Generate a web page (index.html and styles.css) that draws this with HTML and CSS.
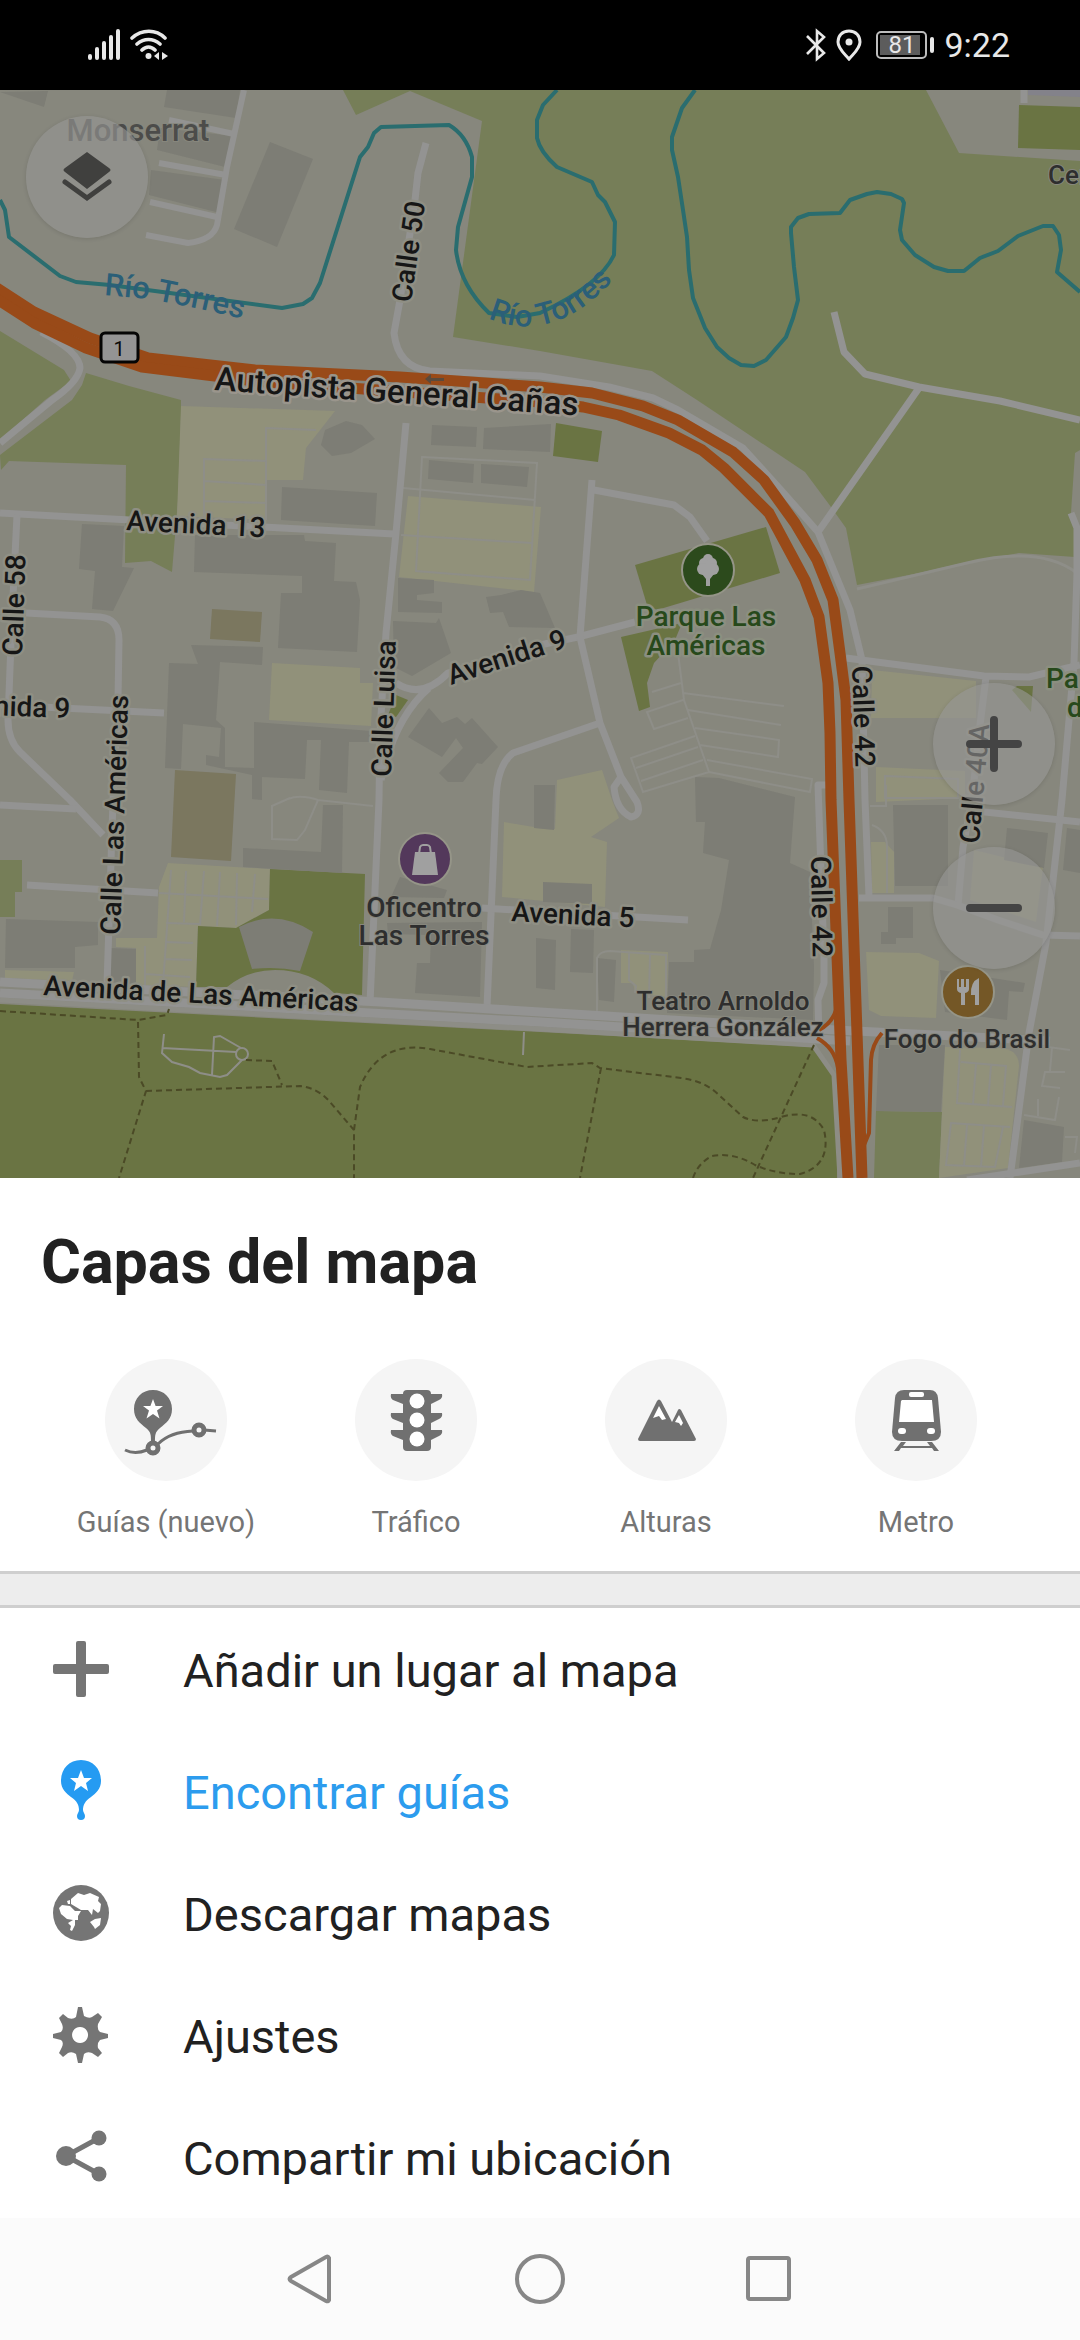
FILE: index.html
```html
<!DOCTYPE html>
<html lang="es">
<head>
<meta charset="utf-8">
<meta name="viewport" content="width=device-width, initial-scale=1">
<title>Capas del mapa</title>
<link rel="stylesheet" href="styles.css">
</head>
<body>
<header class="status">
  <div class="status-group status-signal">
    <svg width="34" height="32" viewBox="0 0 34 32" stroke="#e8e8e8" stroke-width="4" stroke-linecap="round" aria-hidden="true"><path d="M3 27v2M10 20v9M17 14v15M24 8v21M31 2v27"/></svg>
    <svg width="38" height="32" viewBox="0 0 38 32" fill="none" stroke="#e8e8e8" stroke-width="3.6" stroke-linecap="round" aria-hidden="true"><path d="M2 9C12 0 26 0 35 9M7 15c7-6 16-6 23 0M12 21c4-4 9-4 13 0"/><circle cx="18.500" cy="27" r="3" fill="#e8e8e8" stroke="none"/><path d="M24 27l5-4v8zM38 27l-6-4v8z" fill="#e8e8e8" stroke="none"/></svg>
  </div>
  <div class="status-group status-info">
    <svg width="20" height="34" viewBox="0 0 20 34" fill="none" stroke="#e8e8e8" stroke-width="2.600" aria-hidden="true"><path d="M1 8l17 17-7 6V3l7 6L1 26"/></svg>
    <svg width="26" height="32" viewBox="0 0 26 32" aria-hidden="true"><path d="M13 2C6 2 2 7 2 13c0 7 7 12 11 17 4-5 11-10 11-17C24 7 20 2 13 2z" fill="none" stroke="#e8e8e8" stroke-width="3"/><circle cx="13" cy="13" r="3.500" fill="#e8e8e8"/></svg>
    <span class="battery"><span class="battery-level">81</span></span>
    <time class="clock">9:22</time>
  </div>
</header>

<main class="app">
  <section class="map" aria-label="Mapa">
    <svg class="map-canvas" viewBox="0 90 1080 1088" preserveAspectRatio="xMidYMid slice">
      <rect class="land" x="0" y="90" width="1080" height="1088"/>
      <g class="forest">
        <path d="M343 90 356 115 410 91 482 121 453 337 540 351 652 371 697 400 805 472 831 507 846 528 857 585 919 573 967 562 1019 553 1075 557 1077 528 1071 513 1075 453 1080 450V161L959 153 926 90z"/>
        <path d="M0 331 64 370 71 381 45 400 0 440z"/>
        <path d="M86 373 129 386 181 400V415L178 500 172 572 151 561 125 563 126 465 9 461 1 470 0 455 72 400 82 385z"/>
        <path d="M0 860H22V892H15V917H0z"/>
        <path d="M876 1111 942 1112 939 1178H874z"/>
      </g>
      <path d="M1028 90H1080V97L1028 95z" fill="#83828a"/>
      <g class="parking">
        <path d="M181 406 335 411 306 448 303 480H267V520L177 516z"/>
        <path d="M408 496 541 507 534 592 399 577z"/>
        <path d="M272 663 360 668V683H373L371 726 269 720z"/>
        <path d="M168 863 270 869 269 910 236 928 198 926 196 987 136 985V948L116 947V938H157L159 887z"/>
        <path d="M5 970 74 972 72 981 5 978z"/>
        <path d="M557 780 602 770 612 800 619 818 591 837 607 842 605 907 502 897 504 822 540 828 555 829z"/>
        <path d="M872 670 976 681V718H871z"/>
        <path d="M876 767 965 771V798L876 802z"/>
        <path d="M871 842H885L894 852V893H872z"/>
        <path d="M866 952 919 953 939 961 936 1018 881 1016 869 1010z"/>
        <path d="M945 1047 1001 1048Q1019 1050 1019 1066L1008 1168 939 1178z"/>
        <path d="M621 950 668 952 667 997 635 993 633 983H621z"/>
        <path d="M974 850 1043 867 1036 922 970 900z"/>
      </g>
      <g fill="#7b775f">
        <path d="M212 609 262 612 260 642 210 639z"/>
        <path d="M175 770 236 774 231 861 171 857z"/>
      </g>
      <g class="park">
        <path d="M1019 105 1080 107V150L1018 148z"/>
        <path d="M635 565 766 527 780 573 657 610 647 605z"/>
        <path d="M621 637 682 623 675 640 654 663 647 683 650 707 639 711z"/>
        <path d="M556 423 602 431 598 462 553 456z"/>
        <path d="M396 695 408 700 396 717 388 715z"/>
        <path d="M1017 686H1033L1031 712 1012 690z"/>
        <path d="M270 869 365 874 362 995 334 993Q310 970 275 970 248 970 227 987L196 987 198 926 236 928 269 910z"/>
        <path d="M0 1004 540 1032 812 1047 826 1063 833 1077 837 1100V1178H0z"/>
      </g>
      <g class="building">
        <path d="M270 142 313 159 277 247 234 229z"/>
        <path d="M167 90H240L236 118 164 107z"/>
        <path d="M160 128 234 136 229 168 157 150z"/>
        <path d="M151 170 225 180 220 213 149 195z"/>
        <path d="M0 92 48 91 44 107z"/>
        <path d="M325 430 346 421 362 425 375 439 351 453 332 456 321 445z"/>
        <path d="M282 487 377 493 375 526 281 520z"/>
        <path d="M195 535H304L305 541 336 543 334 581 356 582 360 600 357 652 278 648 281 593 302 593V576L194 572z"/>
        <path d="M432 425 477 427 476 447 431 445z"/>
        <path d="M484 428 551 424 550 452 483 449z"/>
        <path d="M429 460 474 464 473 483 428 479z"/>
        <path d="M481 464 529 467 527 487 481 483z"/>
        <path d="M82 524 124 526 122 567 134 568 113 611 92 609 95 571 79 569z"/>
        <path d="M398 578 434 580V593L417 595V600L442 602V613L398 612z"/>
        <path d="M393 621 436 623 439 618 451 653 412 676 394 667z"/>
        <path d="M486 597 501 595 521 590 540 593 555 628 509 627 503 612 490 613z"/>
        <path d="M191 645 263 647 262 665 220 662 216 720 225 728V767L254 768V722L371 731V742L349 742 347 793 319 790 321 740 307 740 305 779 262 777V800L252 799V775L206 765V755L219 757 221 728 183 724 181 769 165 768 169 663 198 664z"/>
        <path d="M429 708 442 723 457 717 465 724 472 718 498 747 482 764 477 763 463 782H448L439 773 463 748 456 738 442 757 408 737z"/>
        <path d="M323 805H343L342 873 243 867V848L321 852z"/>
        <path d="M6 919 98 922V945L75 947V968H5z"/>
        <path d="M110 948 136 949V984L110 982z"/>
        <path d="M400 877 447 890 444 898 391 897z"/>
        <path d="M387 923 482 922 480 997 415 993 417 963 430 963 431 935 388 934z"/>
        <path d="M239 927Q276 908 313 932L300 971Q276 966 252 969z"/>
        <path d="M543 882 592 884V904L543 902z"/>
        <path d="M695 777 719 778 795 797 790 863 810 872 814 967 813 1020 667 1013 669 962H694V950L710 949 721 910 729 860 703 853 705 822 696 822z"/>
        <path d="M571 929 594 930 593 973 570 972z"/>
        <path d="M597 958 616 960 614 1002 599 1000z"/>
        <path d="M536 938 556 940 555 990 536 988z"/>
        <path d="M534 785H555L554 830 534 828z"/>
        <path d="M893 805H948V886H895z"/>
        <path d="M888 907H913V938H896V944H881V932H888z"/>
        <path d="M1007 828 1048 833 1044 868 1004 860z"/>
        <path d="M1067 828 1080 830V873L1063 870z"/>
        <path d="M940 970 1025 983 1023 992 1009 991 1007 1020 945 1012z"/>
        <path d="M879 1045H945L941 1112 876 1111z"/>
        <path d="M1024 1120 1064 1127 1062 1162 1019 1168z"/>
      </g>

      <g class="lane">
        <path d="M204 516V459L267 461M204 481 267 485M204 501 267 503M266 520V428L316 430"/>
        <path d="M422 457 537 463 530 580 416 571zM403 488 535 500M401 535 532 543"/>
        <path d="M171 870 163 985M186 871 184 922M204 871 200 925M220 872 217 926M237 873 236 925M255 874 252 912M159 893 268 899M166 923 200 924M165 942 193 943M164 959 192 960M145 946V985M145 974 190 977"/>
        <path d="M678 653 684 700 709 772M652 692 681 683M784 706 683 693M781 725 688 710M683 700 647 712 654 729 688 718M695 728 779 740 778 757 700 745M695 736 631 758 643 792 709 772M698 747 636 768M703 760 641 781M707 760 812 779 810 792 709 772"/>
        <path d="M597 1012V958Q600 951 610 951L666 955V1010M629 953V980L636 986 635 993M650 954 649 998"/>
        <path d="M960 1050 957 1103 1012 1107M961 1062 1006 1066 1003 1106M976 1064 973 1104M991 1065 988 1105M950 1123 1010 1127M951 1123 946 1165 995 1167 1003 1127M967 1125 964 1166M984 1126 981 1167"/>
        <path d="M885 776 958 779V798H885zM1041 1046 1070 1050M1052 1048 1050 1071M1065 1072H1045L1042 1086 1060 1088M1059 1097 1055 1120 1024 1115M1038 1099V1116M1065 1137H1077L1075 1153"/>
        <path d="M872 825Q886 830 887 845V893M886 785V806H870"/>
        <path d="M290 798 272 806V839L297 840 305 830 318 800 373 806M318 800Q300 794 288 799"/>
        <path d="M164 1034 162 1053 172 1062 189 1067 200 1073 220 1077 227 1075 242 1060M162 1048 236 1052M241 1048 220 1036 214 1037 212 1075M524 1032 523 1055"/>
        <circle cx="242" cy="1054" r="6"/>
      </g>
      <path class="lane wide" d="M857 589 967 563Q1040 545 1077 573"/>

      <g class="road">
        <path d="M41 332Q80 352 80 368 78 382 52 400L0 443"/>
        <path d="M426 143 418 173 415 200 400 300 394 333Q398 368 430 371L540 376 609 387 653 398 678 410 743 448 781 490 818 532 850 610 862 660 865 800 869 897"/>
        <path d="M834 312 844 352 865 374 919 387 1000 401 1080 420M818 532 919 388"/>
        <path d="M1077 573 1074 663 1062 800 1046 943 1029 1033 1010 1178M1071 513 1077 528V573"/>
        <path d="M846 658 984 676 1029 677 1080 665M986 677 979 733 972 800 963 847 958 905"/>
        <path d="M859 898H933L957 905 998 920 1043 935 1080 936M975 811 1080 822M967 1180 1080 1163M1024 90V103"/>
        <path d="M828 785H818L824 957V983L818 1000 819 1038"/>
        <path d="M0 513 394 534M406 423 396 533 386 633 380 733 379 800 370 1003"/>
        <path d="M17 515 12 617 8 720Q8 740 20 752L70 800 103 835"/>
        <path d="M26 613 100 617Q119 619 119 640L118 700 113 800 107 985M0 705 164 713M0 805 76 809M27 885 158 893"/>
        <path d="M396 683Q422 700 448 673L540 645 578 637 635 622M429 688Q395 717 381 780"/>
        <path d="M592 480 580 637 600 723 621 777 637 802Q642 815 631 817 616 810 614 787L621 777M594 490 674 505 690 517 707 541M600 723 513 753Q497 765 496 800L487 1007"/>
        <path d="M482 908 688 920"/>
        <path class="alley" d="M244 90 227 167 217 225Q213 240 188 243L146 235M169 120 234 134M159 163 226 175M150 202 217 217"/>
      </g>
      <path class="sidewalk" d="M0 1000 540 1029 813 1045 834 1075 840 1178"/>
      <g class="road avenue"><path d="M0 982 380 1002 540 1012 836 1030 1050 1041M0 993 540 1022 850 1041"/></g>

      <path class="trail" d="M0 1011 138 1020 167 1015 169 1009M138 1022 139 1077 146 1091 119 1178M146 1091 300 1086Q318 1088 330 1102L354 1130V1178M246 1060 272 1061 282 1085M354 1130 360 1087Q380 1040 430 1049L527 1067 592 1063 600 1068 681 1078Q705 1081 719 1095L743 1117Q757 1124 781 1117 812 1108 824 1130 832 1165 800 1174 775 1174 755 1165 733 1152 712 1156 698 1163 693 1178M601 1068 580 1178M814 1045 753 1178"/>

      <g class="river">
        <path d="M0 200 5 210 9 237 60 276 76 282 110 285 282 308 303 304 312 298 320 283 360 157 368 147 374 133 381 127 449 125Q466 135 472 157L472 177 458 227 456 250Q460 285 489 313L517 317 540 313Q600 285 614 255L615 222 605 202 598 195 592 182 557 167Q540 152 537 138L537 120 543 105 557 90"/>
        <path d="M695 90 682 108 672 137V150L678 177 683 210 687 237 689 270 693 298 705 328 717 347 729 358 741 365 754 366 766 360 786 337 793 318 798 300 794 267 791 233V227L798 218 809 214 840 213 850 200 867 194 877 192 891 194 902 199 904 203 900 230 902 240 915 255 934 267 948 271H964L980 258 998 251 1018 236 1043 226H1053L1059 235 1061 250 1057 272 1080 292"/>
      </g>

      <g class="motorway">
        <path d="M-14 281 34 312 90 338 148 358 255 370 400 377 540 387 592 393 643 406 678 420 733 452 764 480 795 523 817 560 833 600 840 653 846 700 849 800 857 1033 862 1178"/>
        <path d="M-14 292 34 323 86 348 142 367 255 381 350 388 540 402 583 407 619 415 669 433 702 450 724 468 769 513 805 580 819 617 828 683 830 733 831 800 841 1060 848 1178"/>
        <path class="ramp" d="M819 1030Q832 1023 836 1010M817 1038Q835 1048 838 1068M882 1033Q872 1044 871 1060L869 1133 862 1150"/>
      </g>
      <path d="M425 379 431 374V378H444V381H431V384z" fill="#5a4a3c"/>

      <defs>
        <path id="river-west" d="M104 295 150 299 200 309 270 325"/>
        <path id="river-east" d="M488 318Q520 332 550 323 592 312 634 254"/>
      </defs>
      <g class="label river-label">
        <text><textPath href="#river-west">Río Torres</textPath></text>
        <text><textPath href="#river-east">Río Torres</textPath></text>
      </g>
      <g class="label street">
        <text class="highway" transform="translate(214 390) rotate(4)">Autopista General Cañas</text>
        <text transform="translate(411 303) rotate(-82)">Calle 50</text>
        <text transform="translate(126 530) rotate(3)">Avenida 13</text>
        <text transform="translate(22 656) rotate(-88)">Calle 58</text>
        <text transform="translate(70 718) rotate(2)" text-anchor="end">Avenida 9</text>
        <text transform="translate(120 935) rotate(-88)">Calle Las Américas</text>
        <text transform="translate(391 777) rotate(-88)">Calle Luisa</text>
        <text transform="translate(451 685) rotate(-18)">Avenida 9</text>
        <text transform="translate(852 666) rotate(88)">Calle 42</text>
        <text transform="translate(811 856) rotate(89)">Calle 42</text>
        <text transform="translate(979 844) rotate(-85)">Calle 40A</text>
        <text transform="translate(511 921) rotate(3)">Avenida 5</text>
        <text transform="translate(43 995) rotate(3)">Avenida de Las Américas</text>
      </g>
      <g class="label place" text-anchor="middle">
        <text class="suburb" x="138" y="141">Monserrat</text>
        <text class="big" x="424" y="917">Oficentro</text>
        <text class="big" x="424" y="945">Las Torres</text>
        <text x="723" y="1010">Teatro Arnoldo</text>
        <text x="723" y="1036">Herrera González</text>
        <text x="967" y="1048">Fogo do Brasil</text>
        <text x="1048" y="184" text-anchor="start">Cen</text>
      </g>
      <g class="label green-label" text-anchor="middle">
        <text x="706" y="626">Parque Las</text>
        <text x="706" y="655">Américas</text>
        <text x="1046" y="688" text-anchor="start">Pa</text>
        <text x="1067" y="717" text-anchor="start">d</text>
      </g>
      <rect x="101" y="333" width="37" height="29" rx="4" fill="#949494" stroke="#050505" stroke-width="3"/>
      <text class="shield" x="119" y="356" text-anchor="middle">1</text>

      <g class="poi" stroke="#959588" stroke-width="2">
        <circle cx="708" cy="570" r="26" fill="#2c4a1c"/>
        <circle cx="425" cy="859" r="26" fill="#53385b"/>
        <circle cx="968" cy="992" r="26" fill="#745726"/>
      </g>
      <g fill="#a0a0a0">
        <circle cx="708" cy="559" r="5"/><circle cx="704" cy="563" r="5"/><circle cx="712" cy="563" r="5"/><circle cx="703" cy="569" r="6"/><circle cx="713" cy="569" r="6"/><path d="M704 565h8v9h-8z"/>
        <path d="M702 574h12l-4 5v7h-4v-7z"/>
        <path d="M415 852h20l3 23h-26z"/>
        <path d="M419 854l1-7q1-2 3-2h4q2 0 3 2l1 7" fill="none" stroke="#a0a0a0" stroke-width="2"/>
        <path d="M957 979h2v8h2v-8h3v8h2v-8h3v10q0 3-4 4v12h-4v-12q-4-1-4-4zM979 978v27h-4v-10h-4q-1-13 8-17z"/>
      </g>
    </svg>

    <div class="controls controls-layers">
      <button class="fab" type="button" aria-label="Capas">
        <svg width="50" height="52" viewBox="0 0 50 52"><path d="M25 1 47 17q3 2 0 4L25 38 3 21q-3-2 0-4z" fill="#40403e"/><path d="M3 31 25 47 47 31" fill="none" stroke="#40403e" stroke-width="5" stroke-linecap="round"/></svg>
      </button>
    </div>
    <div class="controls controls-zoom">
      <button class="fab" type="button" aria-label="Acercar">
        <svg width="56" height="56" viewBox="0 0 56 56" stroke="#444444" stroke-width="8" stroke-linecap="round"><path d="M28 4v48M4 28h48"/></svg>
      </button>
      <button class="fab" type="button" aria-label="Alejar">
        <svg width="56" height="56" viewBox="0 0 56 56" stroke="#444444" stroke-width="8" stroke-linecap="round"><path d="M4 28h48"/></svg>
      </button>
    </div>
  </section>

  <section class="sheet">
    <h1 class="title">Capas del mapa</h1>
    <div class="layers">
      <button class="layer" type="button">
        <svg class="layer-icon" viewBox="0 0 122 122"><path d="M48 31c-11 0-19 8-19 19 0 10 6 14 12 19 5 4 5 7 5 14h4c0-7 0-10 5-14 6-5 12-9 12-19 0-11-8-19-19-19z"/><path fill="#fff" d="m48 40 2.600 7H58l-6 4.500 2.500 8L48 55l-6.500 4.500 2.500-8-6-4.500h7.400z"/><g fill="none" stroke="#707070"><path stroke-width="3" d="M20 91q10 5 22 0M53 85q12-12 35-13M99 71l12 1"/><circle cx="48" cy="89" r="5" stroke-width="5"/><circle cx="94" cy="71" r="5" stroke-width="5"/></g></svg>
        <span>Guías (nuevo)</span>
      </button>
      <button class="layer" type="button">
        <svg class="layer-icon" viewBox="0 0 122 122"><rect x="48" y="31" width="28" height="61" rx="4"/><path d="M36 35h51q1 4-3 6l-8 4H48l-10-4q-3-2-2-6zM36 54h51q1 4-3 6l-8 4H48l-10-4q-3-2-2-6zM36 71h51q1 4-3 6l-8 4H48l-10-4q-3-2-2-6z"/><g fill="#fff"><circle cx="62" cy="42" r="7.500"/><circle cx="62" cy="61" r="7.500"/><circle cx="62" cy="80" r="7.500"/></g></svg>
        <span>Tráfico</span>
      </button>
      <button class="layer" type="button">
        <svg class="layer-icon" viewBox="0 0 122 122"><path d="M52 42q2-3 4 0l11 21 6-12q1-2 3 0l15 29q0 2-2 2H35q-2 0-2-2z"/><path fill="#fff" d="m54 47 7 13-4 1-3-4-6 2zM74 56l4 8-2 3-2-3-4-1z"/></svg>
        <span>Alturas</span>
      </button>
      <button class="layer" type="button">
        <svg class="layer-icon" viewBox="0 0 122 122"><path d="M49 31h26q7 0 8 8l3 34q0 9-10 9H47q-10 0-10-9l3-34q1-8 9-8z"/><g fill="#fff"><path d="M47 41h30l2 22H44l2-21z"/><rect x="54" y="33" width="15" height="5" rx="2"/><rect x="43" y="69" width="8" height="6" rx="3"/><rect x="72" y="69" width="8" height="6" rx="3"/></g><path d="M46 83h5l-3 4h27l-3-4h5l7 9h-5l-2-3H46l-2 3h-5z"/></svg>
        <span>Metro</span>
      </button>
    </div>
    <div class="divider"></div>
    <nav class="menu" aria-label="Menú">
      <button class="menu-item" type="button">
        <svg class="menu-icon" viewBox="0 0 56 56"><path d="M25 0h6q2 0 2 2v21h21q2 0 2 2v6q0 2-2 2H33v21q0 2-2 2h-6q-2 0-2-2V33H2q-2 0-2-2v-6q0-2 2-2h21V2q0-2 2-2z"/></svg>
        <span>Añadir un lugar al mapa</span>
      </button>
      <button class="menu-item accent" type="button">
        <svg class="menu-icon" viewBox="0 0 56 56"><path d="M28-3C16-3 8 6 8 18c0 8 5 12 10 16 6 4 8 8 8 13 0 2-2 4-2 6a4 4 0 0 0 8 0c0-2-2-4-2-6 0-5 2-9 8-13 5-4 10-8 10-16C48 6 40-3 28-3z"/><path fill="#fff" d="m28 7 3 8h8l-6 5 2 8-7-5-7 5 2-8-6-5h8z"/></svg>
        <span>Encontrar guías</span>
      </button>
      <button class="menu-item" type="button">
        <svg class="menu-icon" viewBox="0 0 56 56"><circle cx="28" cy="28" r="28"/><path fill="#fff" d="M6 23 9 20 17 21 22 26 28 26 25 31 25 35 22 35 22 40 19 46 17 45 18 41 15 38 20 35 14 34 8 29zM14 16l3-1v4h-2zM18 14 25 8 31 10 37 8 46 12 45 16 48 19 47 26 45 28 40 24 39 30 35 25 28 25 18 19zM37 37 42 34 48 33 47 40 42 44 41 42z"/></svg>
        <span>Descargar mapas</span>
      </button>
      <button class="menu-item" type="button">
        <svg class="menu-icon" viewBox="0 0 56 56"><path fill-rule="evenodd" d="M25 0h4l2 9q5 3 8 1l6-4 4 4-4 7q-1 6 2 8l8 2v4l-8 2q-3 3-2 8l4 5-4 4-6-4q-5-2-8 1l-2 9h-4l-2-9q-4-3-8-1l-5 4-4-4 3-6q2-5-1-7l-8-2v-4l8-2q3-3 1-8l-3-6 4-4 5 4q5 2 8-1zM27 20a8 8 0 1 0 .1 0z"/></svg>
        <span>Ajustes</span>
      </button>
      <button class="menu-item" type="button">
        <svg class="menu-icon" viewBox="0 0 56 56"><path d="M46 9 13 27l33 18" fill="none" stroke="#757575" stroke-width="5"/><circle cx="13" cy="27" r="10"/><circle cx="46" cy="9" r="7.500"/><circle cx="46" cy="45" r="7.500"/></svg>
        <span>Compartir mi ubicación</span>
      </button>
    </nav>
  </section>
</main>

<footer class="navbar">
  <button class="nav-key" type="button" aria-label="Atrás"><svg width="50" height="50" viewBox="0 0 50 50"><path d="M42 4v42q-1 2-3 1L4 27q-3-2 0-4L39 3q2-1 3 1z"/></svg></button>
  <button class="nav-key" type="button" aria-label="Inicio"><svg width="50" height="50" viewBox="0 0 50 50"><circle cx="25" cy="25" r="23"/></svg></button>
  <button class="nav-key" type="button" aria-label="Recientes"><svg width="50" height="50" viewBox="0 0 50 50"><rect x="5" y="4" width="41" height="41" rx="2"/></svg></button>
</footer>
</body>
</html>
```
FILE: styles.css
```css
* { box-sizing: border-box; }

body {
  margin: 0;
  min-height: 100vh;
  display: flex;
  flex-direction: column;
  background: #fff;
  color: #212121;
  font-family: Roboto, "Noto Sans", sans-serif;
}

button {
  margin: 0;
  padding: 0;
  border: 0;
  background: none;
  color: inherit;
  font: inherit;
  text-align: left;
}

svg { display: block; }

/* Status bar */
.status {
  display: flex;
  justify-content: space-between;
  align-items: center;
  height: 90px;
  padding: 0 70px 0 87px;
  background: #000;
  color: #e8e8e8;
}
.status-group { display: flex; align-items: center; gap: 9px; }
.status-info { gap: 10px; }
.battery {
  position: relative;
  width: 51px;
  height: 28px;
  margin: 0 7px 0 4px;
  padding: 2px;
  border: 2px solid #bdbdbd;
  border-radius: 5px;
}
.battery::after {
  content: "";
  position: absolute;
  top: 4px;
  right: -9px;
  width: 4px;
  height: 16px;
  border-radius: 2px;
  background: #e8e8e8;
}
.battery-level {
  display: block;
  width: 40px;
  height: 20px;
  padding-left: 8px;
  background: #5c5c5c;
  font-size: 24px;
  line-height: 20px;
}
.clock { font-size: 34px; line-height: 40px; }

/* Map */
.app { flex: 1; display: flex; flex-direction: column; }
.map { position: relative; flex: 1 0 600px; overflow: hidden; background: #87877d; }
.map-canvas { position: absolute; inset: 0; width: 100%; height: 100%; }
.land { fill: #87877d; }
.forest { fill: #767e58; }
.park { fill: #6a7443; }
.parking { fill: #91917a; }
.building { fill: #7d7d75; }
.lane { fill: none; stroke: #8e8e88; stroke-width: 2; }
.lane.wide { stroke-width: 3; }
.road { fill: none; stroke: #939392; stroke-width: 7; stroke-linejoin: round; }
.alley { stroke-width: 6; }
.avenue { stroke-width: 9; }
.sidewalk { fill: none; stroke: #8d8d86; stroke-width: 5; }
.trail { fill: none; stroke: #4b4a26; stroke-width: 2; stroke-dasharray: 6 4; }
.river { fill: none; stroke: #2a6d6f; stroke-width: 4; stroke-linejoin: round; }
.motorway { fill: none; stroke: #994a18; stroke-width: 11; stroke-linejoin: round; }
.ramp { stroke-width: 4; }

.label { font-size: 28px; font-weight: 500; }
.street { fill: #161616; stroke: #8f8f84; stroke-width: 5; stroke-linejoin: round; paint-order: stroke; }
.highway { font-size: 33px; stroke: #9a958c; }
.river-label { fill: #2b5f78; font-size: 31px; }
.place { fill: #2e2e2e; font-size: 26px; stroke: #87877d; stroke-width: 2; paint-order: stroke; }
.place .big { font-size: 28px; }
.place .suburb { font-size: 31px; fill: #4c4c4a; }
.green-label { fill: #27491b; stroke: #8b8f80; stroke-width: 5; stroke-linejoin: round; paint-order: stroke; }
.shield { font-size: 20px; fill: #0a0a0a; }

.controls { position: absolute; display: grid; gap: 42px; }
.controls-layers { top: 26px; left: 26px; }
.controls-zoom { right: 25px; bottom: 209px; }
.fab {
  display: grid;
  place-items: center;
  width: 122px;
  height: 122px;
  border-radius: 50%;
  background: rgba(150, 150, 148, .62);
  box-shadow: 0 1px 4px rgba(0, 0, 0, .12);
}

/* Bottom sheet */
.title {
  margin: 0;
  padding: 48px 41px 61px;
  font-size: 61px;
  font-weight: 700;
  line-height: 72px;
}
.layers { display: grid; grid-template-columns: repeat(4, 1fr); padding: 0 39px 31px 41px; }
.layer {
  display: flex;
  flex-direction: column;
  align-items: center;
  gap: 24px;
  color: #757575;
  font-size: 29px;
  line-height: 35px;
}
.layer-icon { width: 122px; height: 122px; border-radius: 50%; background: #f5f5f5; fill: #707070; }
.divider { height: 37px; border: solid #cfcfcf; border-width: 3px 0; background: #ededed; }
.menu { display: flex; flex-direction: column; }
.menu-item {
  display: flex;
  align-items: center;
  gap: 74px;
  height: 122px;
  padding: 0 53px;
  font-size: 47px;
  line-height: 56px;
}
.menu-item span { padding-top: 3px; }
.menu-icon { width: 56px; height: 56px; overflow: visible; fill: #757575; }
.accent { color: #2c9cee; }
.accent .menu-icon { fill: #259bf2; }

/* System navigation */
.navbar {
  display: flex;
  justify-content: center;
  align-items: center;
  gap: 178px;
  height: 122px;
  background: #fbfbfb;
}
.nav-key svg { fill: none; stroke: #878787; stroke-width: 4; }
```
